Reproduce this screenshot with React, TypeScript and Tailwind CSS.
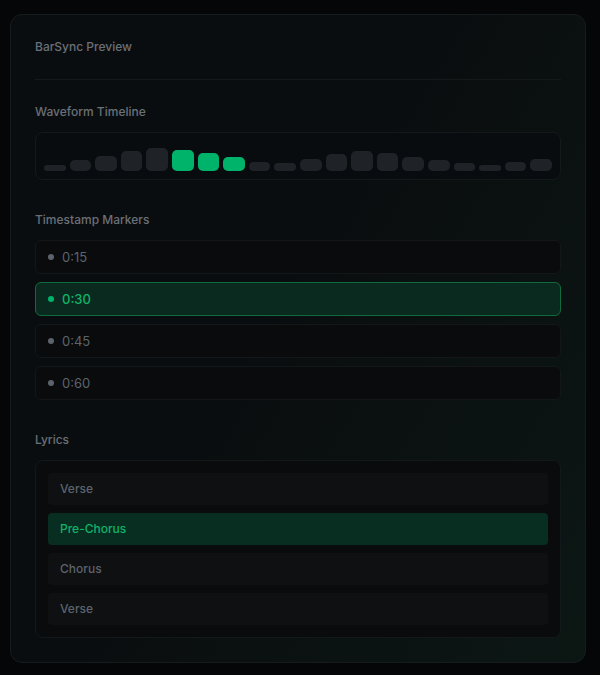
import React from "react";

const bars = [6, 11, 15, 20, 23, 21, 18, 14, 9, 8, 12, 17, 20, 18, 14, 11, 8, 6, 9, 12];
const activeBars = new Set([5, 6, 7]);

const markers = [
  { time: "0:15", active: false },
  { time: "0:30", active: true },
  { time: "0:45", active: false },
  { time: "0:60", active: false },
];

const lyrics = [
  { label: "Verse", active: false },
  { label: "Pre-Chorus", active: true },
  { label: "Chorus", active: false },
  { label: "Verse", active: false },
];

function SectionLabel({ children }: { children: React.ReactNode }) {
  return <div className="text-xs font-medium leading-4 text-[#6a7078]">{children}</div>;
}

export default function App() {
  return (
    <div
      className="min-h-[675px] bg-[#050608] pt-[14px] pl-[10px]"
      style={{ fontFamily: "Inter, 'Noto Sans', sans-serif" }}
    >
      <div className="w-[576px] rounded-xl border border-[#161b1d] bg-[linear-gradient(120deg,#0a0d0f_0%,#0a0d0f_45%,#0c1714_100%)] p-6">
        <div className="border-b border-[#14191b] pb-6">
          <div className="text-xs font-medium leading-4 text-[#6a7078]">BarSync Preview</div>
        </div>

        <div className="mt-6 flex flex-col gap-8">
          <section className="flex flex-col gap-3">
            <SectionLabel>Waveform Timeline</SectionLabel>
            <div className="flex h-12 items-end gap-1 rounded-lg border border-[#13181a] bg-[#090c0e] px-2 pb-2">
              {bars.map((h, i) => (
                <div
                  key={i}
                  className={`flex-1 rounded-[5px] ${activeBars.has(i) ? "bg-[#00b36a]" : "bg-[#1f2328]"}`}
                  style={{ height: `${h}px` }}
                />
              ))}
            </div>
          </section>

          <section className="flex flex-col gap-3">
            <SectionLabel>Timestamp Markers</SectionLabel>
            <div className="flex flex-col gap-2">
              {markers.map((m) => (
                <div
                  key={m.time}
                  className={`flex items-center gap-2 rounded-md border px-3 py-2 ${
                    m.active ? "border-[#0f6a3e] bg-[#0a2a1f]" : "border-[#131719] bg-[#090b0d]"
                  }`}
                >
                  <span className={`h-1.5 w-1.5 rounded-full ${m.active ? "bg-[#00b36a]" : "bg-[#5d636b]"}`} />
                  <span className={`text-[13px] leading-4 ${m.active ? "font-medium text-[#0fb36a]" : "text-[#5d636b]"}`}>
                    {m.time}
                  </span>
                </div>
              ))}
            </div>
          </section>

          <section className="flex flex-col gap-3">
            <SectionLabel>Lyrics</SectionLabel>
            <div className="flex flex-col gap-2 rounded-lg border border-[#13181a] bg-[#090b0d] p-3">
              {lyrics.map((l, i) => (
                <div
                  key={i}
                  className={`rounded px-3 py-2 text-xs font-medium leading-4 ${
                    l.active ? "bg-[#082d21] text-[#0fb36a]" : "bg-[#0e1012] text-[#5d636b]"
                  }`}
                >
                  {l.label}
                </div>
              ))}
            </div>
          </section>
        </div>
      </div>
    </div>
  );
}
